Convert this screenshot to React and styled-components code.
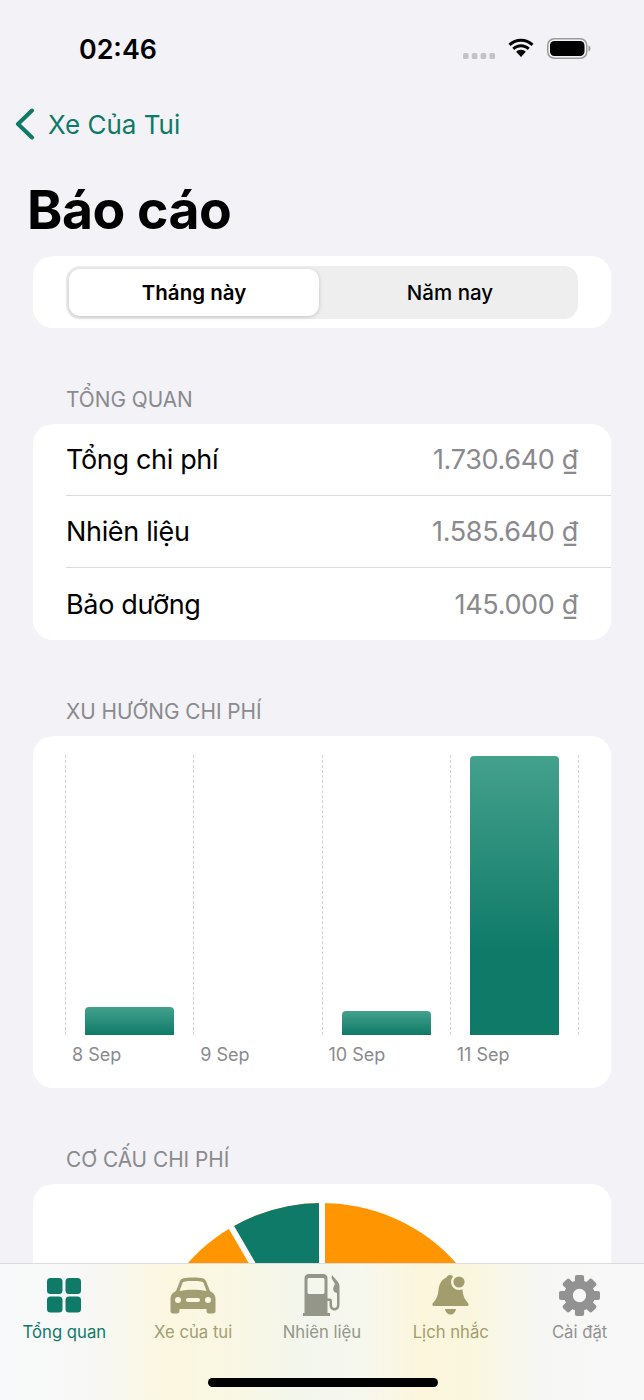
import React from 'react'
import styled, {createGlobalStyle} from 'styled-components'

const GREEN = '#0f7a68'
const ORANGE = '#ff9500'

const GlobalStyle = createGlobalStyle`
  html, body {
    margin: 0;
    padding: 0;
    background: #f2f2f7;
  }
  * { box-sizing: border-box; }
`

const Screen = styled.div`
  position: relative;
  width: 644px;
  height: 1400px;
  overflow: hidden;
  background: #f2f2f7;
  font-family: Inter, "Liberation Sans", sans-serif;
  color: #000;
`

const StatusBar = styled.div`
  height: 96px;
  padding: 31px 53px 0 79px;
  display: flex;
  justify-content: space-between;
  align-items: flex-start;
`

const Clock = styled.div`
  font-size: 26.8px;
  line-height: 36px;
  font-weight: 600;
`

const StatusIcons = styled.div`
  display: flex;
  align-items: flex-start;
  gap: 12px;
  margin-top: 7px;
`

const DotsSvg = styled.svg`
  margin-top: 14px;
`

const BackLink = styled.div`
  display: flex;
  align-items: center;
  gap: 13px;
  height: 40px;
  margin-top: 8px;
  padding-left: 15px;
  color: ${GREEN};
  font-size: 26px;
`

const Title = styled.h1`
  margin: 36px 0 0;
  padding-left: 27px;
  font-size: 53.5px;
  line-height: 60px;
  font-weight: 700;
  letter-spacing: -0.5px;
`

const Card = styled.div`
  margin: 0 33px;
  background: #fff;
  border-radius: 20px;
`

const SegmentCard = styled(Card)`
  margin-top: 16px;
  height: 72px;
  padding: 10px 33px;
`

const Segments = styled.div`
  height: 53px;
  padding: 3px;
  background: #eeeeef;
  border-radius: 14px;
  display: grid;
  grid-template-columns: 1fr 1fr;
  gap: 6px;
`

const Segment = styled.div`
  display: flex;
  align-items: center;
  justify-content: center;
  font-size: 20.5px;
  font-weight: ${props => props.active ? 600 : 500};
  background: ${props => props.active ? '#fff' : 'transparent'};
  border-radius: 11px;
  box-shadow: ${props => props.active ? '0 1px 4px rgba(0,0,0,0.18)' : 'none'};
`

const SectionLabel = styled.div`
  margin-top: 59px;
  padding-left: 66px;
  height: 26px;
  line-height: 26px;
  font-size: 20.8px;
  color: #8a8a8e;
`

const ListCard = styled(Card)`
  margin-top: 11px;
`

const Row = styled.div`
  height: 72px;
  margin-left: 33px;
  padding-right: 33px;
  display: flex;
  align-items: center;
  justify-content: space-between;
  font-size: 27px;
  letter-spacing: -0.33px;
  border-bottom: ${props => props.last ? 'none' : '1px solid #dcdcde'};
`

const RowValue = styled.span`
  color: #8a8a8e;
`

const ChartCard = styled(Card)`
  margin-top: 11px;
  height: 352px;
  padding: 19px 32px 0;
`

const Plot = styled.div`
  height: 280px;
  display: grid;
  grid-template-columns: repeat(4, 128.25px) 1px;
`

const Column = styled.div`
  display: flex;
  align-items: flex-end;
  padding: 0 19px;
  border-left: 1px dashed #d2d2d5;
`

const Bar = styled.div`
  width: 90px;
  border-radius: 4px 4px 0 0;
  background: linear-gradient(180deg, #43a18c 0%, #0f7a68 ${props => props.stop}%);
`

const Axis = styled.div`
  display: grid;
  grid-template-columns: repeat(4, 128.25px);
  margin-top: 8px;
`

const Tick = styled.div`
  padding-left: 7px;
  font-size: 18px;
  line-height: 24px;
  color: #8a8a8e;
`

const PieCard = styled(Card)`
  margin-top: 11px;
  height: 300px;
  padding-top: 14px;
  display: flex;
  justify-content: center;
`

const TabBar = styled.div`
  position: absolute;
  left: 0;
  right: 0;
  bottom: 0;
  height: 137px;
  border-top: 1px solid #dcdcdc;
  background: linear-gradient(90deg,
    #f8f9fa 0,
    #f7f8f6 90px,
    #fbf7e0 170px,
    #f9f7e4 230px,
    #f3f6ec 300px,
    #f6f7ee 360px,
    #fbf6dc 420px,
    #faf6de 470px,
    #f6f7f4 540px,
    #f8f8f9 644px);
  display: grid;
  grid-template-columns: repeat(5, 128.8px);
  padding-top: 8px;
`

const Tab = styled.div`
  display: flex;
  flex-direction: column;
  align-items: center;
  color: ${props => props.color};
`

const TabIcon = styled.div`
  height: 46px;
  display: flex;
  align-items: center;
  justify-content: center;
`

const TabLabel = styled.div`
  margin-top: 3px;
  font-size: 16.7px;
  line-height: 22px;
  font-weight: 400;
`

const HomeIndicator = styled.div`
  position: absolute;
  left: 208px;
  bottom: 13px;
  width: 230px;
  height: 9px;
  border-radius: 5px;
  background: #000;
`

const Dots = () => (
  <DotsSvg width="32" height="8" viewBox="0 0 32 8">
    {[0, 8.8, 17.6, 26.4].map(x => <rect key={x} x={x} y="1" width="5.6" height="6" rx="1.5" fill="#c4c4c6"/>)}
  </DotsSvg>
)

const Wifi = () => (
  <svg width="28" height="20" viewBox="0 0 28 18.5">
    <path d="M14 3c4 0 7.5 1.500 10.500 4.300l2-2.200C23 1.700 18.700 0 14 0S5 1.700 1.500 5.100l2 2.200C6.500 4.500 10 3 14 3z" fill="#000"/>
    <path d="M14 8.500c2.600 0 4.800 1 6.700 2.700l2-2.200C20.300 6.800 17.300 5.500 14 5.500S7.700 6.800 5.300 9l2 2.200C9.200 9.500 11.400 8.500 14 8.500z" fill="#000"/>
    <path d="M14 11c-1.900 0-3.500.7-4.800 1.900l4.800 5.400 4.800-5.400C17.500 11.700 15.900 11 14 11z" fill="#000"/>
  </svg>
)

const Battery = () => (
  <svg width="44" height="21" viewBox="0 0 44 21">
    <rect x="0.75" y="0.75" width="39" height="19.5" rx="6.5" fill="none" stroke="#9b9b9e" strokeWidth="1.5"/>
    <rect x="3" y="3" width="34.5" height="15" rx="4.5" fill="#000"/>
    <path d="M41.5 7.500c1.400.4 2 1.600 2 3s-.6 2.600-2 3z" fill="#9b9b9e"/>
  </svg>
)

const Chevron = () => (
  <svg width="20" height="32" viewBox="0 0 20 32">
    <path d="M17 2.500L3 16l14 13.500" fill="none" stroke={GREEN} strokeWidth="4" strokeLinecap="round" strokeLinejoin="round"/>
  </svg>
)

const GridIcon = () => (
  <svg width="36" height="36" viewBox="0 0 36 36" fill={GREEN}>
    <rect x="1" y="1" width="15.5" height="16" rx="3.5"/>
    <rect x="19.5" y="1" width="15.5" height="16" rx="3.5"/>
    <rect x="1" y="19.5" width="15.5" height="16" rx="3.5"/>
    <rect x="19.5" y="19.5" width="15.5" height="16" rx="3.5"/>
  </svg>
)

const CarIcon = () => (
  <svg width="46" height="37" viewBox="0 0 46 37" fill="#a39d74">
    <path fillRule="evenodd" d="M10 4C11 1.500 14 .5 23 .5S35 1.500 36 4l4 10c3.500 2 5.500 4 5.500 8v12c0 1.500-1 2.500-2.500 2.500h-4c-1.500 0-2.500-1-2.500-2.500v-2h-27v2c0 1.500-1 2.500-2.500 2.500H3C1.500 36.500.5 35.500.5 34V22c0-4 2-6 5.500-8zM12.500 6L9.500 14c4.500-1 8.500-1.300 13.500-1.300s9 .3 13.500 1.300L33.500 6C33 4.500 30 4 23 4S13 4.500 12.500 6zM8 20a3 3 0 100 6 3 3 0 000-6zm30 0a3 3 0 100 6 3 3 0 000-6zM18 21c-1.200 0-2 .8-2 2s.8 2 2 2h10c1.200 0 2-.8 2-2s-.8-2-2-2z"/>
  </svg>
)

const PumpIcon = () => (
  <svg width="37" height="42" viewBox="0 0 37 42" fill="#94968a">
    <path fillRule="evenodd" d="M1.500 4c0-2.200 1.800-4 4-4h15c2.200 0 4 1.800 4 4v35H27v3H0v-3h1.500zM6 4c-.8 0-1.500.7-1.500 1.500v13c0 .8.700 1.500 1.500 1.500h14c.8 0 1.500-.7 1.500-1.500v-13C21.500 4.700 20.800 4 20 4z"/>
    <path d="M29 1l6 7c1.500 2 1.500 4 1.500 6v17c0 3-2 5.500-5 5.500s-5-2.500-5-5.500v-4H24v-2.500h3c1 0 2 1 2 2.500v4c0 2 1 3 2.500 3S34 33 34 31V19c-3-.5-4.500-3-3.500-6l1.500-3-3.500-6z"/>
  </svg>
)

const BellIcon = () => (
  <svg width="37" height="41" viewBox="0 0 37 41" fill="#a39d6e">
    <mask id="bell-cut">
      <rect width="37" height="41" fill="#fff"/>
      <circle cx="27" cy="7" r="8" fill="#000"/>
    </mask>
    <path mask="url(#bell-cut)" d="M18 0c2 0 3 1 3.500 2.500C27 4 30 9 30.500 15c.5 6 2.500 10 5.500 13 1.200 1.200.5 3-1 3H2c-1.500 0-2.200-1.800-1-3 3-3 5-7 5.500-13C7 9 10 4 14.500 2.500 15 1 16 0 18 0z"/>
    <circle cx="27" cy="7" r="5.6"/>
    <path d="M13 34h11c-.5 3.500-3 5.500-5.500 5.500S13.500 37.500 13 34z"/>
  </svg>
)

const GearIcon = () => {
  const teeth = [0, 45, 90, 135, 180, 225, 270, 315]
  return (
    <svg width="41" height="41" viewBox="-20 -20 40 40">
      <g fill="#929292">
        {teeth.map(a => <rect key={a} x="-4.5" y="-20" width="9" height="8" rx="2" transform={`rotate(${a})`}/>)}
      </g>
      <circle r="10.75" fill="none" stroke="#929292" strokeWidth="8.5"/>
    </svg>
  )
}

// full pie, the tab bar covers everything below the top cap
const Pie = () => (
  <svg width="370" height="370" viewBox="-185 -185 370 370">
    <circle r="180" fill={ORANGE}/>
    <path d="M0 0L-90.5-155.600A180 180 0 0 1 0-180z" fill={GREEN}/>
    <path d="M0 0V-185M0 0L-93.100-159.900" fill="none" stroke="#fff" strokeWidth="6"/>
  </svg>
)

const overview = [
  {label: 'Tổng chi phí', value: '1.730.640 ₫'},
  {label: 'Nhiên liệu', value: '1.585.640 ₫'},
  {label: 'Bảo dưỡng', value: '145.000 ₫'},
]

const days = [
  {label: '8 Sep', height: 28},
  {label: '9 Sep', height: 0},
  {label: '10 Sep', height: 24},
  {label: '11 Sep', height: 279},
]

const tabs = [
  {label: 'Tổng quan', color: GREEN, icon: <GridIcon/>},
  {label: 'Xe của tui', color: '#a39d74', icon: <CarIcon/>},
  {label: 'Nhiên liệu', color: '#94968a', icon: <PumpIcon/>},
  {label: 'Lịch nhắc', color: '#a39d6e', icon: <BellIcon/>},
  {label: 'Cài đặt', color: '#929292', icon: <GearIcon/>},
]

const App = () => (
  <Screen>
    <GlobalStyle/>
    <StatusBar>
      <Clock>02:46</Clock>
      <StatusIcons><Dots/><Wifi/><Battery/></StatusIcons>
    </StatusBar>
    <BackLink><Chevron/>Xe Của Tui</BackLink>
    <Title>Báo cáo</Title>

    <SegmentCard>
      <Segments>
        <Segment active>Tháng này</Segment>
        <Segment>Năm nay</Segment>
      </Segments>
    </SegmentCard>

    <SectionLabel>TỔNG QUAN</SectionLabel>
    <ListCard>
      {overview.map((item, i) => (
        <Row key={item.label} last={i === overview.length - 1}>
          <span>{item.label}</span>
          <RowValue>{item.value}</RowValue>
        </Row>
      ))}
    </ListCard>

    <SectionLabel>XU HƯỚNG CHI PHÍ</SectionLabel>
    <ChartCard>
      <Plot>
        {days.map(day => (
          <Column key={day.label}>
            {day.height > 0 && <Bar stop={day.height > 100 ? 70 : 100} style={{height: day.height}}/>}
          </Column>
        ))}
        <Column/>
      </Plot>
      <Axis>
        {days.map(day => <Tick key={day.label}>{day.label}</Tick>)}
      </Axis>
    </ChartCard>

    <SectionLabel>CƠ CẤU CHI PHÍ</SectionLabel>
    <PieCard><Pie/></PieCard>

    <TabBar>
      {tabs.map(tab => (
        <Tab key={tab.label} color={tab.color}>
          <TabIcon>{tab.icon}</TabIcon>
          <TabLabel>{tab.label}</TabLabel>
        </Tab>
      ))}
    </TabBar>
    <HomeIndicator/>
  </Screen>
)

export default App
